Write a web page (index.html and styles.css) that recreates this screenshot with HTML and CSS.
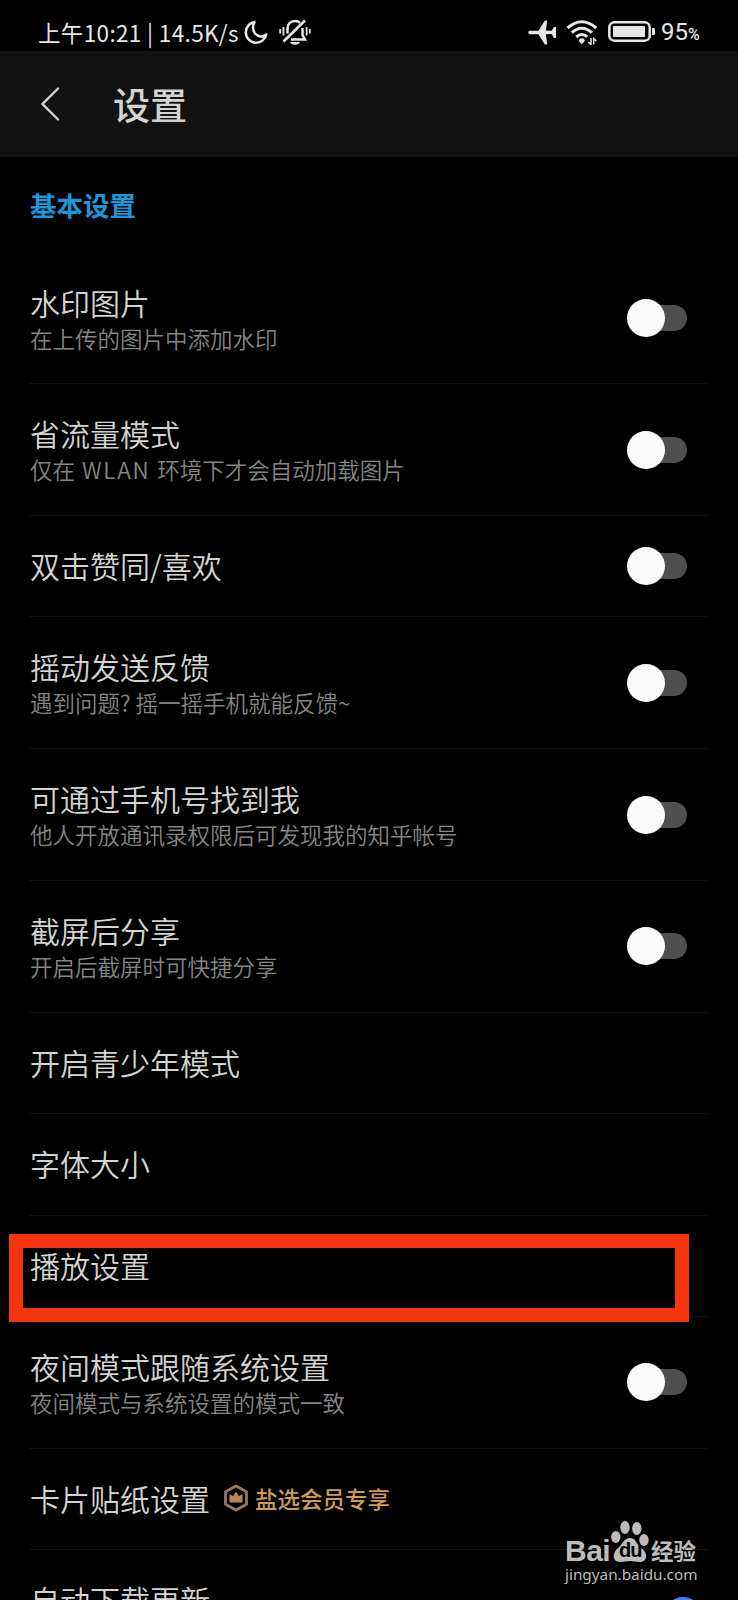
FILE: index.html
```
<!DOCTYPE html>
<html lang="zh-CN">
<head>
  <meta charset="UTF-8">
  <meta name="viewport" content="width=device-width, initial-scale=1.0">
  <title>设置</title>
  <link rel="stylesheet" href="styles.css">
</head>
<body>
  <div class="status-bar">
    <span class="status-time">上午10:21 | 14.5K/s</span>
    <svg class="icon-moon" width="24" height="25" viewBox="0 0 24 25">
      <path d="M10.5 2C6 2.600 1.800 7 1.800 12.300C1.800 18.200 6.500 22.700 12 22.700C17 22.700 21.300 19.200 22.200 14.500C19 17.500 14 17 11.300 13.800C8.600 10.600 8.300 5.500 10.500 2Z"/>
    </svg>
    <svg class="icon-mute" width="32" height="26" viewBox="0 0 32 26">
      <path d="M1.200 10v4.500M4.400 8v8.500M27.600 8v8.500M30.800 10v4.500" stroke-width="1.800"/>
      <path d="M8.500 14.500V10C8.500 5 11.500 2 16 2C18 2 19.800 2.600 21 3.800M23.500 9V16L26 20.600H12" stroke-width="2.500"/>
      <path d="M26 1.500L4.500 22.500" stroke-width="2.600"/>
      <path class="solid" d="M11 23h10c-1 3.500-9 3.500-10 0z"/>
    </svg>
    <div class="status-right">
      <svg class="icon-plane" width="29" height="25" viewBox="0 0 29 25">
        <path d="M2 10.700H10.500L16.500 1Q17 .5 19.300 .5L17.800 10.500L23.500 10.800L26 7H28V18H26L23.500 14L17.800 14.300L19.300 24.500Q17 24.500 16.500 24L10.500 14.200H2Q.2 13.800 .2 12.500Q.2 11 2 10.700Z"/>
      </svg>
      <svg class="icon-wifi" width="32" height="25" viewBox="0 0 32 25">
        <path d="M1.500 8Q15.800 -4.500 30.200 8M5.800 12.600Q15.800 4 25.900 12.600M10.200 17Q15.800 12.200 21.300 16.700"/>
        <path class="solid" d="M15.800 18.300Q18.500 18.300 18.800 20.500Q18 22.500 15.800 24Q13.500 22.500 12.800 20.500Q13.300 18.300 15.800 18.300Z"/>
        <path class="arrows" d="M25 18v6.500L22.200 22M27.700 24.500V18.500L30.300 21"/>
      </svg>
      <svg class="icon-battery" width="48" height="22" viewBox="0 0 48 22">
        <rect x="1.300" y="1.300" width="40.400" height="18.400" rx="5" fill="none" stroke="#e6e6e6" stroke-width="2.500"/>
        <rect x="5" y="5" width="32" height="11" rx="1" fill="#e6e6e6"/>
        <path d="M44 7h1.500q1.500 0 1.500 1.500v4q0 1.500-1.500 1.500H44z" fill="#e6e6e6"/>
      </svg>
      <span class="battery-text">95<small>%</small></span>
    </div>
  </div>

  <header class="header">
    <svg class="back" width="20" height="34" viewBox="0 0 20 34">
      <path d="M18 1.500L2.500 17L18 32.500"/>
    </svg>
    <h1>设置</h1>
  </header>

  <main class="settings">
    <h2>基本设置</h2>
    <div class="row">
      <div class="text"><p class="name">水印图片</p><p class="desc">在上传的图片中添加水印</p></div>
      <span class="switch"></span>
    </div>
    <div class="row">
      <div class="text"><p class="name">省流量模式</p><p class="desc">仅在 <span class="latin">WLAN</span> 环境下才会自动加载图片</p></div>
      <span class="switch"></span>
    </div>
    <div class="row single">
      <div class="text"><p class="name">双击赞同/喜欢</p></div>
      <span class="switch"></span>
    </div>
    <div class="row">
      <div class="text"><p class="name">摇动发送反馈</p><p class="desc">遇到问题? 摇一摇手机就能反馈~</p></div>
      <span class="switch"></span>
    </div>
    <div class="row">
      <div class="text"><p class="name">可通过手机号找到我</p><p class="desc">他人开放通讯录权限后可发现我的知乎帐号</p></div>
      <span class="switch"></span>
    </div>
    <div class="row">
      <div class="text"><p class="name">截屏后分享</p><p class="desc">开启后截屏时可快捷分享</p></div>
      <span class="switch"></span>
    </div>
    <div class="row single">
      <div class="text"><p class="name">开启青少年模式</p></div>
    </div>
    <div class="row single">
      <div class="text"><p class="name">字体大小</p></div>
    </div>
    <div class="row single">
      <div class="text"><p class="name">播放设置</p></div>
      <div class="highlight"></div>
    </div>
    <div class="row">
      <div class="text"><p class="name">夜间模式跟随系统设置</p><p class="desc">夜间模式与系统设置的模式一致</p></div>
      <span class="switch"></span>
    </div>
    <div class="row single">
      <div class="text">
        <p class="name">卡片贴纸设置
          <span class="vip">
            <svg width="26" height="28" viewBox="0 0 26 28">
              <path d="M13 2L23.500 7.800V20.200L13 26L2.500 20.200V7.800Z" fill="none" stroke="#94795a" stroke-width="2.800" stroke-linejoin="round"/>
              <path d="M6.500 10L10 12.300L13 7.500L16 12.300L19.500 10V18.500H6.500Z" fill="#b88a50"/>
            </svg>
            盐选会员专享
          </span>
        </p>
      </div>
    </div>
    <div class="row">
      <div class="text"><p class="name">自动下载更新</p></div>
      <span class="switch on"></span>
    </div>
  </main>

  <div class="watermark">
    <div class="brand">
      <span class="bai">Bai</span>
      <span class="paw">
        <svg width="38" height="42" viewBox="0 0 38 42">
          <ellipse cx="4.800" cy="16" rx="4.700" ry="6"/>
          <ellipse cx="14" cy="6.500" rx="4.700" ry="6.500"/>
          <ellipse cx="25.800" cy="7.500" rx="4.700" ry="6.500"/>
          <ellipse cx="33" cy="19" rx="4.700" ry="6"/>
          <path d="M19 17C25 17 25 23 30 27C37 31 37 41 29 41C25 41 22 40 19 40C16 40 13 41 9 41C1 41 1 32 7 27C12 23 13 17 19 17Z"/>
        </svg>
        <span class="du">du</span>
      </span>
      <span class="jingyan">经验</span>
    </div>
    <div class="url">jingyan.baidu.com</div>
  </div>
</body>
</html>
```

FILE: styles.css
```
* {
  box-sizing: border-box;
}
html, body {
  margin: 0;
  padding: 0;
  height: 1600px;
  overflow: hidden;
}
body {
  position: relative;
  background: #000;
  color: #d3d3d3;
  font-family: "Noto Sans CJK SC", sans-serif;
}
h1, h2, p {
  margin: 0;
}
svg {
  display: block;
  flex: none;
}

/* status bar */
.status-bar {
  display: flex;
  align-items: center;
  height: 51px;
  padding: 13px 36px 0 38px;
  color: #e6e6e6;
}
.status-time {
  width: 206px;
  font-size: 22.500px;
  line-height: 36px;
  letter-spacing: 0.350px;
  white-space: nowrap;
}
.icon-moon {
  fill: none;
  stroke: #e6e6e6;
  stroke-width: 2.5;
  stroke-linejoin: round;
}
.icon-mute {
  margin-left: 11px;
  fill: none;
  stroke: #e6e6e6;
}
.icon-mute .solid {
  fill: #e6e6e6;
  stroke: none;
}
.status-right {
  display: flex;
  align-items: center;
  margin-left: auto;
}
.icon-plane {
  fill: #e6e6e6;
}
.icon-wifi {
  margin-left: 9px;
  fill: none;
  stroke: #e6e6e6;
  stroke-width: 3;
}
.icon-wifi .solid {
  fill: #e6e6e6;
  stroke: none;
}
.icon-wifi .arrows {
  stroke-width: 1.5;
}
.icon-battery {
  margin-left: 10px;
}
.battery-text {
  margin-left: 5px;
  width: 41px;
  padding-top: 2px;
  font-family: Roboto, sans-serif;
  font-size: 24px;
  line-height: 36px;
  white-space: nowrap;
}
.battery-text small {
  font-size: 16px;
  font-weight: 500;
}

/* title bar */
.header {
  display: flex;
  align-items: center;
  height: 105.500px;
  padding-left: 40px;
  background: #121212;
}
.back {
  fill: none;
  stroke: #d3d3d3;
  stroke-width: 2.4;
  stroke-linecap: round;
}
.header h1 {
  margin-left: 53px;
  font-size: 37px;
  font-weight: 500;
  line-height: 50px;
}

/* list */
.settings {
  padding: 0 30px;
}
.settings h2 {
  height: 96px;
  padding-top: 28px;
  color: #1c97dc;
  font-size: 26.500px;
  font-weight: 700;
  line-height: 40px;
}
.row {
  position: relative;
  display: flex;
  align-items: center;
  justify-content: space-between;
  height: 131.800px;
  padding-right: 21px;
  border-bottom: 1px solid #141414;
}
.row.single {
  height: 101.400px;
}
.text {
  align-self: flex-start;
  padding-top: 29px;
}
.name {
  display: flex;
  align-items: center;
  font-size: 30px;
  font-weight: 350;
  line-height: 40px;
  white-space: nowrap;
}
.desc {
  margin-top: 1px;
  color: #858585;
  font-size: 22.500px;
  font-weight: 350;
  line-height: 30px;
  white-space: nowrap;
}
.desc .latin {
  margin: 0 2px;
  letter-spacing: 1.700px;
}
.switch {
  position: relative;
  width: 57px;
  height: 26px;
  border-radius: 13px;
  background: #4f4f4f;
}
.switch::before {
  content: "";
  position: absolute;
  left: -3px;
  top: -6px;
  width: 38px;
  height: 38px;
  border-radius: 50%;
  background: #fafafa;
}
.switch.on {
  background: #1d3057;
}
.switch.on::before {
  left: 34px;
  background: #4c80ee;
}
.vip {
  display: flex;
  align-items: center;
  gap: 6px;
  margin-left: 13px;
  color: #cd9a58;
  font-size: 22.500px;
  font-weight: 500;
}
.highlight {
  position: absolute;
  left: -21px;
  top: 18px;
  width: 680px;
  height: 88px;
  border: 14px solid #f73410;
  z-index: 1;
}

/* watermark */
.watermark {
  position: absolute;
  left: 565px;
  top: 1521px;
  width: 134px;
  color: #bcbcbc;
}
.brand {
  display: flex;
  align-items: flex-end;
  height: 42px;
}
.bai {
  width: 46px;
  height: 26px;
  font-family: "Liberation Sans", sans-serif;
  font-size: 30px;
  font-weight: 700;
  line-height: 28px;
  letter-spacing: -0.500px;
}
.paw {
  position: relative;
  width: 38px;
}
.paw svg {
  fill: #bcbcbc;
}
.du {
  position: absolute;
  left: 8px;
  top: 17px;
  color: #000;
  font-family: "Liberation Sans", sans-serif;
  font-size: 20px;
  font-weight: 700;
  line-height: 24px;
  letter-spacing: -1px;
}
.jingyan {
  margin-left: 2px;
  font-size: 22.500px;
  font-weight: 700;
  line-height: 25px;
}
.url {
  font-family: "Noto Sans", sans-serif;
  font-size: 15.300px;
  line-height: 22px;
  white-space: nowrap;
}
```
